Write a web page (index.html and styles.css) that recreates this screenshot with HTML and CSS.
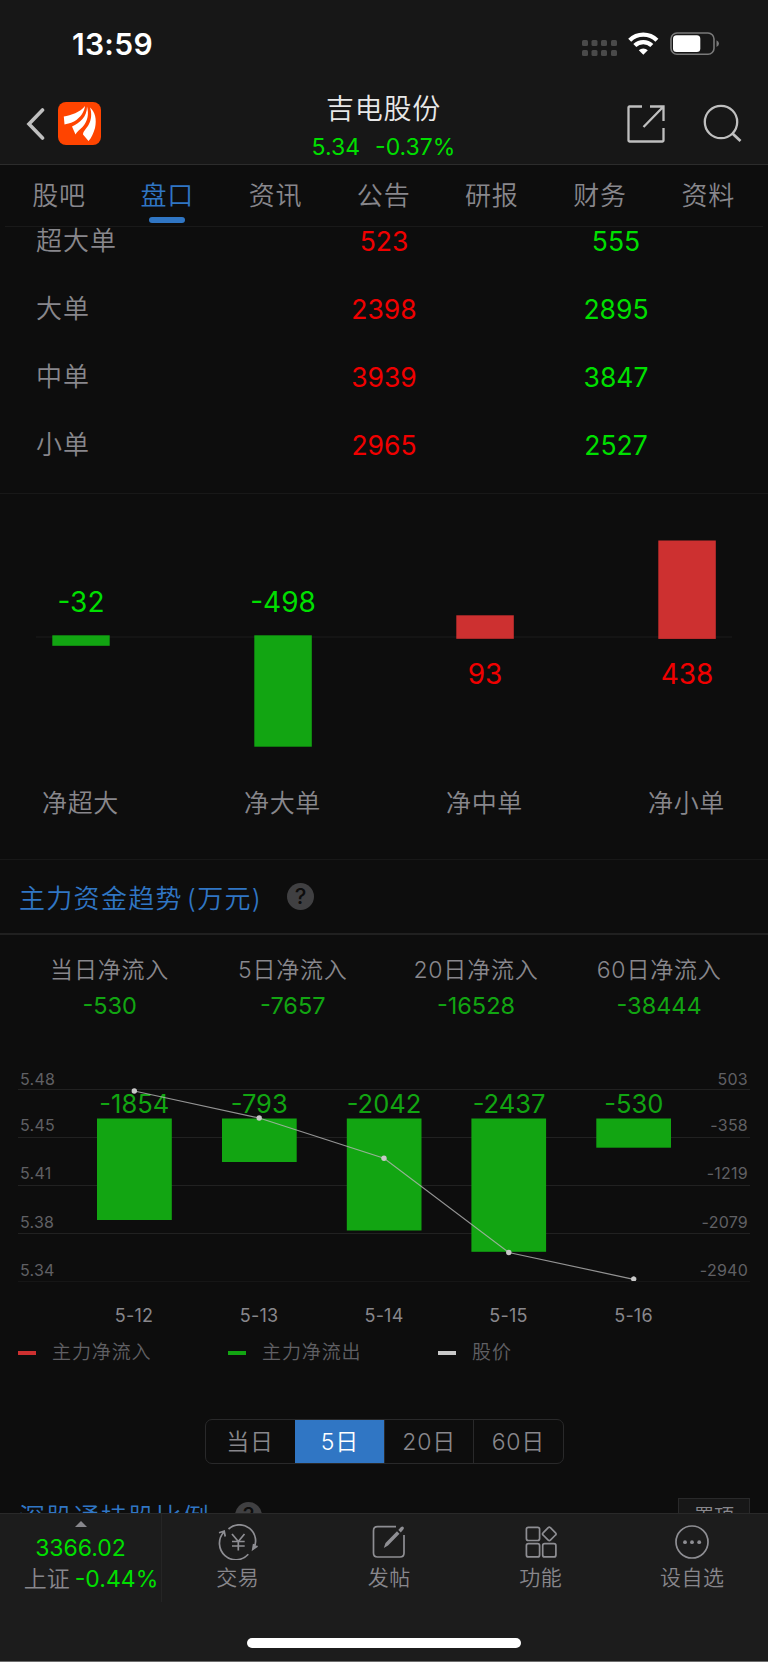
FILE: index.html
```html
<!DOCTYPE html>
<html lang="zh-CN">
<head>
<meta charset="utf-8">
<title>吉电股份</title>
<link rel="stylesheet" href="styles.css">
</head>
<body>
<div class="app">
  <header class="header">
    <div class="status">
      <span class="time">13:59</span>
      <svg class="status-icons" width="140" height="30" viewBox="0 0 140 30">
        <g fill="#4a4a4a">
          <rect x="2" y="12" width="6" height="6" rx="1.5"/><rect x="11.5" y="12" width="6" height="6" rx="1.5"/><rect x="21" y="12" width="6" height="6" rx="1.5"/><rect x="31" y="12" width="6" height="6" rx="1.5"/>
          <rect x="2" y="22" width="6" height="6" rx="1.5"/><rect x="11.5" y="22" width="6" height="6" rx="1.5"/><rect x="21" y="22" width="6" height="6" rx="1.5"/><rect x="31" y="22" width="6" height="6" rx="1.5"/>
        </g>
        <g fill="none" stroke="#fff" stroke-width="4.300">
          <path d="M49.700 12.200A19.500 19.500 0 0 1 76.900 12.200"/>
          <path d="M54.800 17.500A12.300 12.300 0 0 1 71.800 17.500"/>
        </g>
        <path d="M63.300 26.800L58.800 22.200A6.500 6.500 0 0 1 67.800 22.200Z" fill="#fff"/>
        <rect x="91" y="5" width="43" height="21.300" rx="6" fill="none" stroke="#7a7a7a" stroke-width="1.600"/>
        <rect x="93" y="7.300" width="27.300" height="16.700" rx="3.500" fill="#fff"/>
        <path d="M136.500 12.200Q139 13.500 139 15.600T136.500 19Z" fill="#7a7a7a"/>
      </svg>
    </div>
    <div class="nav">
      <svg width="20" height="34" viewBox="0 0 20 34"><path d="M17.500 3L4 17L17.500 31" fill="none" stroke="#bfbfbf" stroke-width="3.600" stroke-linecap="round"/></svg>
      <svg class="logo" width="43" height="43" viewBox="0 0 43 43">
        <rect width="43" height="43" rx="8" fill="#ff4400"/>
        <g fill="#fff">
          <path d="M27 4C26.500 9 23 15.500 16 19.500C12 21.500 8.500 21.500 6.500 22.500L5.800 14.500C13 13 22 10.500 27 4Z"/>
          <path d="M29 4.500C31 12 30 19 24.500 25C21.500 28 19 29.500 17.500 32.500L14 24.500C22 20.500 29 15 29 4.500Z"/>
          <path d="M32 5.500C37 10 39 17 37 26C35.500 31 33.500 36 30.500 39L25 32.500C25 29.500 28 27 30.500 23C33.500 18 34 11 32 5.500Z"/>
        </g>
      </svg>
      <div class="stock">
        <h1>吉电股份</h1>
        <p><span>5.34</span><span>-0.37%</span></p>
      </div>
      <svg class="share" width="40" height="40" viewBox="0 0 40 40"><path d="M16 2.500H3.500Q2.500 2.500 2.500 3.500V36.500Q2.500 37.500 3.500 37.500H36.500Q37.500 37.500 37.500 36.500V24M24 2.500H37.500V17M37.500 2.500L17.500 23" fill="none" stroke="#bfbfbf" stroke-width="2.300"/></svg>
      <svg class="search" width="40" height="40" viewBox="0 0 40 40"><circle cx="18" cy="18" r="16.200" fill="none" stroke="#bfbfbf" stroke-width="2.300"/><path d="M29.500 29.500L37.500 37" stroke="#bfbfbf" stroke-width="2.800"/></svg>
    </div>
  </header>
  <nav class="tabs">
    <span>股吧</span><span class="active">盘口</span><span>资讯</span><span>公告</span><span>研报</span><span>财务</span><span>资料</span>
  </nav>
  <main class="content">
    <section class="orders">
      <div class="order"><span>超大单</span><b class="up">523</b><b class="down">555</b></div>
      <div class="order"><span>大单</span><b class="up">2398</b><b class="down">2895</b></div>
      <div class="order"><span>中单</span><b class="up">3939</b><b class="down">3847</b></div>
      <div class="order"><span>小单</span><b class="up">2965</b><b class="down">2527</b></div>
    </section>
    <section class="net">
      <svg width="768" height="365" viewBox="0 494 768 365">
        <path d="M36 637H732" stroke="#1c1c1c"/>
        <g fill="#12a512">
          <rect x="52.300" y="635.300" width="57.400" height="10.500"/>
          <rect x="254.300" y="635.300" width="57.500" height="111.400"/>
        </g>
        <g fill="#cd3030">
          <rect x="456.300" y="615.300" width="57.500" height="23.500"/>
          <rect x="658.300" y="540.500" width="57.500" height="98.400"/>
        </g>
        <g class="net-num">
          <text x="81" y="611.500" fill="#00df00">-32</text><text x="283" y="611.500" fill="#00df00">-498</text>
          <text x="485" y="683.500" fill="#f00000">93</text><text x="687" y="683.500" fill="#f00000">438</text>
        </g>
        <g class="net-label">
          <text x="80.500" y="811.500">净超大</text><text x="282.500" y="811.500">净大单</text><text x="484.500" y="811.500">净中单</text><text x="686.500" y="811.500">净小单</text>
        </g>
      </svg>
    </section>
    <section class="trend">
      <h2>主力资金趋势<span>(万元)</span><i class="help">?</i></h2>
      <div class="stats">
        <div><span>当日净流入</span><b>-530</b></div>
        <div><span>5日净流入</span><b>-7657</b></div>
        <div><span>20日净流入</span><b>-16528</b></div>
        <div><span>60日净流入</span><b>-38444</b></div>
      </div>
      <svg class="chart" width="768" height="270" viewBox="0 1060 768 270">
        <path d="M18 1089.500H750M18 1137.500H750M18 1185.500H750M18 1233.500H750" stroke="#212121"/>
        <path d="M18 1281.500H750" stroke="#161616"/>
        <g class="axis">
          <text x="20" y="1085">5.48</text><text x="20" y="1130.500">5.45</text><text x="20" y="1179">5.41</text><text x="20" y="1227.500">5.38</text><text x="20" y="1276">5.34</text>
        </g>
        <g class="axis axis-right">
          <text x="748" y="1085">503</text><text x="748" y="1130.500">-358</text><text x="748" y="1179">-1219</text><text x="748" y="1227.500">-2079</text><text x="748" y="1276">-2940</text>
        </g>
        <g fill="#12a512">
          <rect x="97" y="1118.500" width="74.800" height="101.500"/>
          <rect x="222" y="1118.500" width="74.700" height="43.500"/>
          <rect x="346.800" y="1118.500" width="74.700" height="112"/>
          <rect x="471.400" y="1118.500" width="74.700" height="133.300"/>
          <rect x="596.300" y="1118.500" width="74.700" height="29.200"/>
        </g>
        <g class="bar-num">
          <text x="134.300" y="1112.500">-1854</text><text x="259.200" y="1112.500">-793</text><text x="384" y="1112.500">-2042</text><text x="509" y="1112.500">-2437</text><text x="633.700" y="1112.500">-530</text>
        </g>
        <path d="M134.300 1091L259.200 1118L384 1158.300L508.800 1252.500L633.700 1279.300" fill="none" stroke="#b5b5b5" stroke-opacity=".8" stroke-width="1.200"/>
        <g fill="#c8c8c8"><circle cx="134.300" cy="1091" r="2.700"/><circle cx="259.200" cy="1118" r="2.700"/><circle cx="384" cy="1158.300" r="2.700"/><circle cx="508.800" cy="1252.500" r="2.700"/><path d="M631.700 1281A2.700 2.700 0 1 1 635.700 1281Z"/></g>
        <g class="dates">
          <text x="134" y="1321.500">5-12</text><text x="259" y="1321.500">5-13</text><text x="384" y="1321.500">5-14</text><text x="508.500" y="1321.500">5-15</text><text x="633.500" y="1321.500">5-16</text>
        </g>
      </svg>
      <div class="legend">
        <span class="red">主力净流入</span><span class="green">主力净流出</span><span class="white">股价</span>
      </div>
      <div class="segments"><span>当日</span><span class="on">5日</span><span>20日</span><span>60日</span></div>
    </section>
    <section class="holding">
      <h2>深股通持股比例<i class="help">?</i></h2>
      <button class="pin">置顶</button>
    </section>
  </main>
  <footer class="footer">
    <div class="bar">
      <div class="index">
        <i class="caret"></i>
        <b>3366.02</b>
        <p><span>上证</span><b>-0.44%</b></p>
      </div>
      <div class="action">
        <svg width="40" height="36" viewBox="0 0 40 36"><g fill="none" stroke="#8e8e93" stroke-width="1.700"><path d="M10.500 5A16.200 16.200 0 0 1 35.300 25.300M1 8.700L6.200 7.200L7.200 12.500M5.700 8.200A16.200 16.200 0 0 0 30.300 30.300M39.500 22L34.800 25.300L35.700 20M14 10L20.300 17.500L26.500 10M20.300 17.500V26.500M14 17.500H26.700M14 22H26.700"/></g></svg>
        <span>交易</span>
      </div>
      <div class="action">
        <svg width="40" height="36" viewBox="0 0 40 36"><path d="M27 2.700H8.500Q4.500 2.700 4.500 6.700V29Q4.500 33 8.500 33H31Q35 33 35 29V11" fill="none" stroke="#8e8e93" stroke-width="1.700"/><path d="M14.800 24L16.500 19L28 7.300L30.500 9.800L19 21.500ZM29.300 6L32 3Q33.500 2 34.500 3T34.300 5.500L31.800 8.400Z" fill="#8e8e93"/></svg>
        <span>发帖</span>
      </div>
      <div class="action">
        <svg width="40" height="36" viewBox="0 0 40 36"><g fill="none" stroke="#8e8e93" stroke-width="1.700"><rect x="5.400" y="3.300" width="13.200" height="13.200" rx="2"/><rect x="5.400" y="19.700" width="13.200" height="13.200" rx="2"/><rect x="21.700" y="19.700" width="13.200" height="13.200" rx="2"/><path d="M27.200 3.700Q28.300 2.500 29.400 3.700L34.500 8.800Q35.700 9.900 34.500 11L29.400 16.100Q28.300 17.200 27.200 16.100L22.100 11Q20.900 9.900 22.100 8.800Z"/></g></svg>
        <span>功能</span>
      </div>
      <div class="action">
        <svg width="40" height="36" viewBox="0 0 40 36"><circle cx="20" cy="18" r="16" fill="none" stroke="#8e8e93" stroke-width="1.700"/><g fill="#8e8e93"><circle cx="13" cy="18.200" r="1.900"/><circle cx="20" cy="18.200" r="1.900"/><circle cx="27.200" cy="18.200" r="1.900"/></g></svg>
        <span>设自选</span>
      </div>
    </div>
    <div class="home"></div>
  </footer>
</div>
</body>
</html>
```

FILE: styles.css
```css
* { box-sizing: border-box; }
body { margin: 0; background: #0d0d0d; font-family: Inter, "Noto Sans CJK SC", sans-serif; font-weight: 400; color: #88878c; }
h1, h2, p { margin: 0; font-weight: inherit; }
b { font-weight: 400; }
i { font-style: normal; }
svg { display: block; flex: none; }
.app { width: 768px; height: 1662px; display: flex; flex-direction: column; overflow: hidden; }
.header { height: 165px; flex: none; background: #171717; border-bottom: 1px solid #2c2c2c; }
.status { height: 85px; display: flex; justify-content: space-between; padding: 28px 48px 0 72px; }
.time { color: #fff; font-size: 30px; font-weight: 600; line-height: 32px; letter-spacing: .3px; }
.nav { display: flex; height: 79px; padding: 0 25px 0 25px; }
.nav > svg { margin-top: 22px; }
.nav > .logo { margin: 17px 0 0 13px; }
.stock { flex: 1; text-align: center; padding-left: 40px; }
.stock h1 { color: #e8e8e8; font-size: 28px; font-weight: 350; line-height: 44px; padding-top: 2px; letter-spacing: .8px; }
.stock p { color: #00df00; font-size: 23px; line-height: 32px; display: flex; justify-content: center; gap: 15px; }
.nav > .share { margin: 19px 0 0; }
.nav > .search { margin: 19px 0 0 37px; }
.tabs { height: 62px; flex: none; display: grid; grid-template-columns: repeat(7, 108.2px); margin: 0 5px; border-bottom: 1px solid #191919; }
.tabs span { text-align: center; font-size: 26px; font-weight: 350; line-height: 62px; letter-spacing: .8px; }
.tabs .active { color: #3076c4; display: flex; flex-direction: column; align-items: center; height: 60px; }
.tabs .active::after { content: ""; width: 36px; height: 6px; border-radius: 3px; background: #3076c4; margin-top: -10px; flex: none; }
.content { height: 1286px; flex: none; overflow: hidden; }
.orders { height: 267px; border-bottom: 1px solid #181818; }
.order { display: grid; grid-template-columns: 232px 232px 232px; padding-left: 36px; height: 68.200px; align-items: center; font-size: 26px; line-height: 26px; }
.order:first-child { height: 48px; padding-bottom: 20px; }
.order:first-child span, .order:first-child b { align-self: start; padding-top: 1px; }
.order span { font-weight: 350; letter-spacing: 1px; }
.order b { text-align: center; font-size: 26.500px; }
.up { color: #f00000; }
.down { color: #00df00; }
.net { height: 366px; border-bottom: 1px solid #181818; }
.net-num, .net-label, .bar-num, .dates { text-anchor: middle; }
.net-num { font-size: 28px; }
.net-label { font-size: 25px; font-weight: 350; fill: #88878c; letter-spacing: .6px; }
h2 { display: flex; align-items: center; color: #3076c4; font-size: 26px; font-weight: 350; letter-spacing: 1.300px; }
h2 span { padding-left: 4px; }
.help { width: 27px; height: 27px; border-radius: 50%; background: #404042; color: #0d0d0d; font-size: 22px; font-weight: 500; line-height: 27px; text-align: center; letter-spacing: 0; margin-left: 25px; }
.trend h2 { height: 75px; padding-left: 19px; border-bottom: 2px solid #202020; }
.stats { display: grid; grid-template-columns: repeat(4, 183.200px); padding: 18px 0 0 18px; height: 125px; text-align: center; }
.stats div { display: flex; flex-direction: column; }
.stats span { font-size: 23px; font-weight: 350; line-height: 34px; letter-spacing: .8px; }
.stats b { color: #12a512; font-size: 23.500px; line-height: 37px; }
.axis { font-size: 16px; fill: #606064; letter-spacing: .25px; }
.axis-right { text-anchor: end; }
.bar-num { font-size: 25.500px; fill: #12a512; }
.dates { font-size: 18px; fill: #88878c; letter-spacing: .2px; }
.legend { display: grid; grid-template-columns: 210px 210px 210px; padding-left: 18px; height: 44px; font-size: 19px; font-weight: 350; line-height: 46px; color: #606064; letter-spacing: .9px; }
.legend span { display: flex; align-items: center; gap: 16px; }
.legend span::before { content: ""; width: 18px; height: 4px; }
.legend .red::before { background: #cd3030; }
.legend .green::before { background: #12a512; }
.legend .white::before { background: #c8c8c8; }
.segments { margin: 45px 0 0 204.500px; width: 359px; height: 45px; display: grid; grid-template-columns: repeat(4, 1fr); border: 1px solid #29292a; border-radius: 7px; overflow: hidden; }
.segments span { text-align: center; font-size: 23px; font-weight: 350; line-height: 45px; letter-spacing: .8px; border-left: 1px solid #29292a; height: 43px; }
.segments span:first-child { border-left: 0; }
.segments .on { background: #3076c4; color: #fff; border-color: #3076c4; }
.holding { display: flex; justify-content: space-between; padding: 33px 18px 0 19px; }
.holding h2 { height: 36px; }
.pin { width: 72px; height: 36px; border: 1px solid #29292a; background: #171717; color: #88878c; font: 350 20px/34px "Noto Sans CJK SC", sans-serif; padding: 0; margin-top: 1px; }
.footer { height: 149px; flex: none; background: #1c1c1c; border-top: 1px solid #292929; border-bottom: 1px solid #6c6c6c; }
.bar { height: 88px; display: grid; grid-template-columns: 162px repeat(4, 151.500px); }
.index { border-right: 1px solid #252525; display: flex; flex-direction: column; align-items: center; padding-top: 7px; color: #00df00; font-size: 23px; line-height: 31px; }
.index .caret { border: 6.500px solid transparent; border-top: 0; border-bottom-color: #88878c; }
.index > b { margin-top: 6px; }
.index p { display: flex; gap: 5px; margin-left: 21px; white-space: nowrap; }
.index span { color: #88878c; font-weight: 350; }
.action { display: flex; flex-direction: column; align-items: center; padding-top: 10px; font-size: 21px; font-weight: 350; line-height: 36px; letter-spacing: .5px; }
.home { width: 274px; height: 10px; border-radius: 5px; background: #fff; margin: 36px auto 0; }
```
